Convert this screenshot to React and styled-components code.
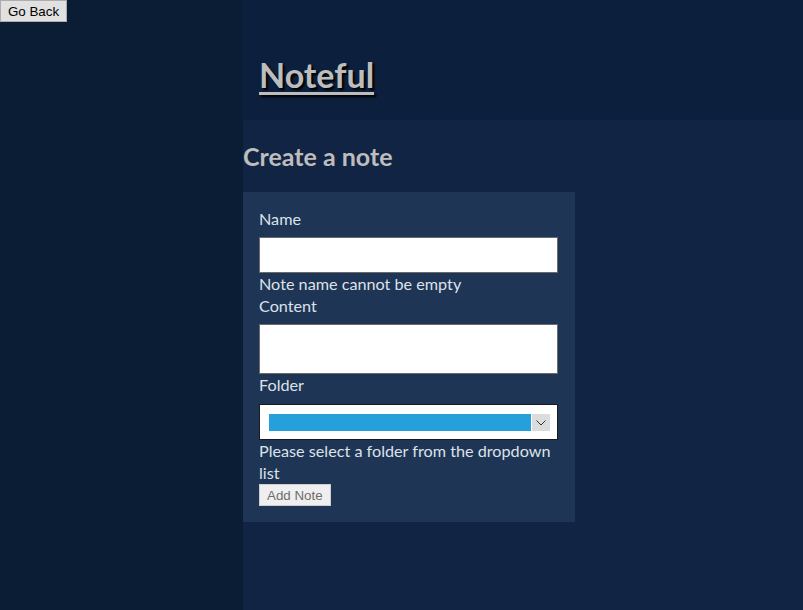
import React from 'react'
import styled, { createGlobalStyle } from 'styled-components';

const Global = createGlobalStyle`
  html, body {
    margin: 0;
    padding: 0;
    height: 100%;
    background: #112444;
  }
  #root {
    height: 100%;
  }
`;

const Page = styled.div`
  display: flex;
  min-height: 610px;
  font-family: Lato, "Open Sans", sans-serif;
`;

const Sidebar = styled.nav`
  width: 243px;
  flex-shrink: 0;
  background: #0b1c35;
`;

const NativeButton = styled.button`
  display: block;
  font-family: "Liberation Sans", Arial, sans-serif;
  font-size: 13.33px;
  height: 22px;
  padding: 1px 7px;
  background: #e1e1e1;
  border: 1px solid #adadad;
  border-radius: 0;
  color: ${p => (p.muted ? '#6d6d6d' : '#000')};
  ${p => p.muted && 'background: #efefef; border-color: #cfcfcf;'}
`;

const Column = styled.div`
  flex: 1;
  display: flex;
  flex-direction: column;
`;

const Header = styled.header`
  height: 120px;
  box-sizing: border-box;
  background: #0c1f3c;
  padding: 56px 16px 0;
`;

const Title = styled.h1`
  margin: 0;
  font-size: 34px;
  line-height: 38px;
  font-weight: bold;
  color: #bdbdbd;
  text-decoration: underline;
  text-underline-offset: 4px;
  text-shadow: 2px 2px 2px #000;
`;

const Main = styled.main`
  flex: 1;
  background: #112444;
`;

const Heading = styled.h2`
  margin: 22px 0 21px;
  font-size: 25px;
  font-weight: bold;
  color: #bdbdbd;
  line-height: 29px;
`;

const Form = styled.form`
  width: 332px;
  box-sizing: border-box;
  padding: 16px;
  background: #1e3556;
  color: #dde2e8;
  font-size: 16.2px;
  line-height: 22px;
`;

const Label = styled.label`
  display: block;
  margin-bottom: ${p => p.gap || 7}px;
`;

const Hint = styled.div``;

const TextInput = styled.input`
  display: block;
  width: 299px;
  height: 36px;
  box-sizing: border-box;
  border: 1px solid #6b6b6b;
  background: #fff;
  margin: 0;
`;

const TextArea = styled.textarea`
  display: block;
  width: 299px;
  height: 50px;
  box-sizing: border-box;
  border: 1px solid #6b6b6b;
  background: #fff;
  margin: 0;
  resize: none;
`;

const SelectBox = styled.div`
  display: flex;
  align-items: stretch;
  width: 299px;
  height: 36px;
  box-sizing: border-box;
  border: 1px solid #1a1a1a;
  background: #fff;
  padding: 9px 7px 8px 9px;
  gap: 1px;
`;

const Select = styled.select`
  flex: 1;
  appearance: none;
  border: none;
  background: #26a0da;
  margin: 0;
  padding: 0;
  outline: none;
`;

const Arrow = styled.span`
  width: 18px;
  display: flex;
  align-items: center;
  justify-content: center;
  background: #dcdcdc;
`;

export default function App() {
  return (
    <>
      <Global />
      <Page>
        <Sidebar>
          <NativeButton type="button">Go Back</NativeButton>
        </Sidebar>
        <Column>
          <Header>
            <Title>Noteful</Title>
          </Header>
          <Main>
            <Heading>Create a note</Heading>
            <Form>
              <Label htmlFor="name">Name</Label>
              <TextInput id="name" type="text" />
              <Hint>Note name cannot be empty</Hint>
              <Label htmlFor="content">Content</Label>
              <TextArea id="content" />
              <Label htmlFor="folder" gap={8}>Folder</Label>
              <SelectBox>
                <Select id="folder">
                  <option value=""></option>
                </Select>
                <Arrow>
                  <svg width="10" height="6" viewBox="0 0 10 6">
                    <path d="M0.5 0.5 L5 5 L9.5 0.5" fill="none" stroke="#333" strokeWidth="1" />
                  </svg>
                </Arrow>
              </SelectBox>
              <Hint>Please select a folder from the dropdown list</Hint>
              <NativeButton type="submit" muted>Add Note</NativeButton>
            </Form>
          </Main>
        </Column>
      </Page>
    </>
  )
}
